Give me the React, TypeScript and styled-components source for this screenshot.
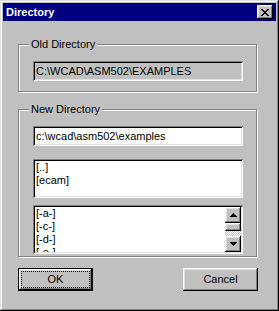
import React from "react";
import styled, { createGlobalStyle } from "styled-components";

const Global = createGlobalStyle`
  html, body { margin: 0; padding: 0; background: #c0c0c0; }
  body { font-family: "Liberation Sans", Arial, sans-serif; font-size: 11px; color: #000; }
`;

const raised = `
  box-shadow: inset -1px -1px 0 #000, inset 1px 1px 0 #fff, inset -2px -2px 0 #808080, inset 2px 2px 0 #dfdfdf;
`;
const sunken = `
  box-shadow: inset 1px 1px 0 #808080, inset -1px -1px 0 #fff, inset 2px 2px 0 #000, inset -2px -2px 0 #dfdfdf;
`;

const Window = styled.div`
  box-sizing: border-box;
  width: 279px;
  height: 311px;
  padding: 3px;
  background: #c0c0c0;
  display: flex;
  flex-direction: column;
  box-shadow: inset -1px -1px 0 #000, inset 1px 1px 0 #dfdfdf, inset -2px -2px 0 #808080, inset 2px 2px 0 #fff;
`;

const TitleBar = styled.div`
  height: 18px;
  background: #000080;
  color: #fff;
  font-weight: bold;
  font-size: 11px;
  display: flex;
  align-items: center;
  justify-content: space-between;
  padding-left: 3px;
  padding-right: 3px;
`;

const TitleText = styled.span`
  line-height: 13px;
`;

const CloseButton = styled.div`
  box-sizing: border-box;
  width: 16px;
  height: 14px;
  background: #c0c0c0;
  ${raised}
  display: flex;
  align-items: center;
  justify-content: center;
  padding-left: 0px;
  svg { display: block; }
`;

const Body = styled.div`
  display: flex;
  flex-direction: column;
  padding: 23px 18px 0 15px;
`;

const Group = styled.div<{ $h: number; $mt?: number }>`
  position: relative;
  box-sizing: border-box;
  height: ${(p) => p.$h}px;
  margin-top: ${(p) => p.$mt ?? 0}px;
  width: 239px;
  border: 1px solid #808080;
  box-shadow: inset 1px 1px 0 #fff, 1px 1px 0 #fff;
  padding: 16px 0 0 14px;
  display: flex;
  flex-direction: column;
`;

const Legend = styled.span`
  position: absolute;
  top: -7px;
  left: 10px;
  padding: 0 2px;
  background: #c0c0c0;
  line-height: 13px;
`;

const Field = styled.div<{ $disabled?: boolean }>`
  box-sizing: border-box;
  width: 210px;
  height: 20px;
  background: ${(p) => (p.$disabled ? "#c0c0c0" : "#fff")};
  ${sunken}
  padding: 3px 3px 0 3px;
  line-height: 14px;
  white-space: nowrap;
  overflow: hidden;
`;

const ListBox = styled.div<{ $h: number; $mt: number }>`
  box-sizing: border-box;
  width: 210px;
  height: ${(p) => p.$h}px;
  margin-top: ${(p) => p.$mt}px;
  background: #fff;
  ${sunken}
  padding: 2px;
  display: flex;
`;

const Items = styled.div`
  flex: 1;
  overflow: hidden;
  padding-left: 1px;
`;

const Item = styled.div`
  height: 13px;
  line-height: 13px;
  white-space: nowrap;
`;

const ScrollBar = styled.div`
  width: 16px;
  display: flex;
  flex-direction: column;
`;

const ScrollBtn = styled.div`
  box-sizing: border-box;
  width: 16px;
  height: 16px;
  background: #c0c0c0;
  ${raised}
  display: flex;
  align-items: center;
  justify-content: center;
  svg { display: block; }
`;

const Thumb = styled.div`
  box-sizing: border-box;
  width: 16px;
  height: 8px;
  background: #c0c0c0;
  ${raised}
`;

const Track = styled.div`
  flex: 1;
  background: repeating-conic-gradient(#c0c0c0 0 25%, #fff 0 50%) 0 0 / 2px 2px;
`;

const ButtonRow = styled.div`
  display: flex;
  justify-content: space-between;
  width: 240px;
  margin-top: 11px;
`;

const Button = styled.div<{ $default?: boolean }>`
  box-sizing: border-box;
  width: 75px;
  height: 23px;
  background: #c0c0c0;
  display: flex;
  align-items: center;
  justify-content: center;
  line-height: 13px;
  ${(p) =>
    p.$default
      ? `border: 1px solid #000; ${raised}`
      : raised}
`;

const Focus = styled.span`
  box-sizing: border-box;
  display: flex;
  align-items: center;
  justify-content: center;
  width: 67px;
  height: 15px;
  outline: 1px dotted #000;
  outline-offset: 0;
  border: none;
`;

const CloseGlyph = () => (
  <svg width="8" height="7" viewBox="0 0 8 7" shapeRendering="crispEdges">
    <path
      d="M0 0h2v1h-2zM6 0h2v1h-2zM1 1h2v1h-2zM5 1h2v1h-2zM2 2h4v1h-4zM3 3h2v1h-2zM2 4h4v1h-4zM1 5h2v1h-2zM5 5h2v1h-2zM0 6h2v1h-2zM6 6h2v1h-2z"
      fill="#000"
    />
  </svg>
);

const UpArrow = () => (
  <svg width="7" height="4" viewBox="0 0 7 4" shapeRendering="crispEdges">
    <path d="M3 0h1v1h-1zM2 1h3v1h-3zM1 2h5v1h-5zM0 3h7v1h-7z" fill="#000" />
  </svg>
);

const DownArrow = () => (
  <svg width="7" height="4" viewBox="0 0 7 4" shapeRendering="crispEdges">
    <path d="M0 0h7v1h-7zM1 1h5v1h-5zM2 2h3v1h-3zM3 3h1v1h-1z" fill="#000" />
  </svg>
);

export default function App() {
  return (
    <>
      <Global />
      <Window>
        <TitleBar>
          <TitleText>Directory</TitleText>
          <CloseButton>
            <CloseGlyph />
          </CloseButton>
        </TitleBar>
        <Body>
          <Group $h={48}>
            <Legend>Old Directory</Legend>
            <Field $disabled>C:\WCAD\ASM502\EXAMPLES</Field>
          </Group>
          <Group $h={148} $mt={17}>
            <Legend>New Directory</Legend>
            <Field>c:\wcad\asm502\examples</Field>
            <ListBox $h={39} $mt={13}>
              <Items>
                <Item>[..]</Item>
                <Item>[ecam]</Item>
              </Items>
            </ListBox>
            <ListBox $h={49} $mt={7}>
              <Items>
                <Item>[-a-]</Item>
                <Item>[-c-]</Item>
                <Item>[-d-]</Item>
                <Item>[-e-]</Item>
              </Items>
              <ScrollBar>
                <ScrollBtn>
                  <UpArrow />
                </ScrollBtn>
                <Thumb />
                <Track />
                <ScrollBtn>
                  <DownArrow />
                </ScrollBtn>
              </ScrollBar>
            </ListBox>
          </Group>
          <ButtonRow>
            <Button $default>
              <Focus>OK</Focus>
            </Button>
            <Button>Cancel</Button>
          </ButtonRow>
        </Body>
      </Window>
    </>
  );
}
